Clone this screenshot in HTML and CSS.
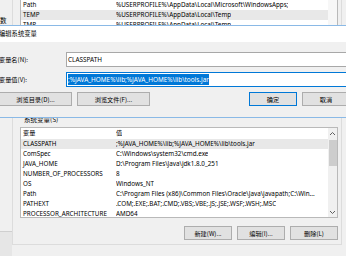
FILE: index.html
```html
<!DOCTYPE html>
<html>
<head>
  <title>编辑系统变量</title>
  <link rel="stylesheet" href="styles.css">
</head>
<body>
  <div class="screen">

    <!-- parent window: user variables (mostly hidden) -->
    <div class="top">
      <div class="gutter"><span class="cut-char">数</span></div>
      <div class="group">
        <div class="list list-top">
          <div class="rows">
            <div class="row"><span class="c1">Path</span><span class="c2">%USERPROFILE%\AppData\Local\Microsoft\WindowsApps;</span></div>
            <div class="row sel"><span class="c1">TEMP</span><span class="c2">%USERPROFILE%\AppData\Local\Temp</span></div>
            <div class="row"><span class="c1">TMP</span><span class="c2">%USERPROFILE%\AppData\Local\Temp</span></div>
          </div>
          <div class="track"></div>
        </div>
      </div>
    </div>

    <!-- edit dialog -->
    <div class="dialog">
      <div class="titlebar">编辑系统变量</div>
      <div class="dlg-body">
        <div class="field">
          <label for="varName">变量名(N):</label>
          <div class="input" id="varName">CLASSPATH</div>
        </div>
        <div class="field">
          <label for="varValue">变量值(V):</label>
          <div class="input focus" id="varValue"><span class="picked">;%JAVA_HOME%\lib;%JAVA_HOME%\lib\tools.jar</span></div>
        </div>
        <div class="btn-row">
          <button class="btn w-dir">浏览目录(D)...</button>
          <button class="btn w-file">浏览文件(F)...</button>
          <span class="spacer"></span>
          <button class="btn w-ok default">确定</button>
          <button class="btn w-ok">取消</button>
        </div>
      </div>
    </div>

    <!-- parent window: system variables -->
    <div class="bottom">
      <div class="gutter">
        <div class="gutter-box"></div>
      </div>
      <div class="group group-sys">
        <div class="group-label"><span>系统变量(S)</span></div>
        <div class="list list-sys">
          <div class="rows">
            <div class="row head"><span class="c1">变量</span><span class="c2">值</span></div>
            <div class="row sel"><span class="c1">CLASSPATH</span><span class="c2">;%JAVA_HOME%\lib;%JAVA_HOME%\lib\tools.jar</span></div>
            <div class="row"><span class="c1">ComSpec</span><span class="c2">C:\Windows\system32\cmd.exe</span></div>
            <div class="row"><span class="c1">JAVA_HOME</span><span class="c2">D:\Program Files\Java\jdk1.8.0_251</span></div>
            <div class="row"><span class="c1">NUMBER_OF_PROCESSORS</span><span class="c2">8</span></div>
            <div class="row"><span class="c1">OS</span><span class="c2">Windows_NT</span></div>
            <div class="row"><span class="c1">Path</span><span class="c2">C:\Program Files (x86)\Common Files\Oracle\Java\javapath;C:\Win...</span></div>
            <div class="row"><span class="c1">PATHEXT</span><span class="c2">.COM;.EXE;.BAT;.CMD;.VBS;.VBE;.JS;.JSE;.WSF;.WSH;.MSC</span></div>
            <div class="row"><span class="c1">PROCESSOR_ARCHITECTURE</span><span class="c2">AMD64</span></div>
          </div>
          <div class="scrollbar">
            <div class="arrow">
              <svg width="7" height="5" viewBox="0 0 7 5"><path d="M1 4 L3.5 1.5 L6 4" fill="none" stroke="#606060" stroke-width="1"/></svg>
            </div>
            <div class="thumb"></div>
            <div class="gap"></div>
            <div class="arrow">
              <svg width="7" height="5" viewBox="0 0 7 5"><path d="M1 1 L3.5 3.5 L6 1" fill="none" stroke="#606060" stroke-width="1"/></svg>
            </div>
          </div>
        </div>
        <div class="sys-buttons">
          <button class="btn w-sys">新建(W)...</button>
          <button class="btn w-sys">编辑(I)...</button>
          <button class="btn w-sys">删除(L)</button>
        </div>
      </div>
    </div>

  </div>
</body>
</html>
```

FILE: styles.css
```css
/* Windows 10 style environment variable dialogs */
body {
  margin: 0;
  background: #f0f0f0;
  font-family: "Noto Sans", "Noto Sans CJK SC", sans-serif;
  font-size: 6.3px;
  color: #000;
}
.screen {
  width: 346px;
  height: 256px;
  overflow: hidden;
  position: relative;
}

/* shared parent window pieces */
.top, .bottom {
  display: flex;
}
.gutter {
  width: 12px;
  flex: none;
  display: flex;
  flex-direction: column;
}
.cut-char {
  font-family: "Noto Sans CJK SC", sans-serif;
  font-size: 6.5px;
  line-height: 10px;
}
.group {
  width: 330px;
  border-left: 1px solid #dcdcdc;
  border-right: 1px solid #dcdcdc;
  padding-left: 7px;
  box-sizing: border-box;
}
.list {
  width: 318px;
  display: flex;
  background: #fff;
  border: 1px solid #b9b9b9;
  box-sizing: border-box;
}
.rows {
  width: 307px;
}
.row {
  display: flex;
  height: 10px;
  line-height: 10px;
  white-space: nowrap;
  overflow: hidden;
}
.row.sel {
  background: #e8e8e8;
}
.c1 {
  width: 93px;
  padding-left: 2px;
  flex: none;
}
.c2 {
  overflow: hidden;
}

/* top list */
.top {
  height: 25px;
}
.list-top {
  height: 25px;
  border-top: none;
  border-bottom: none;
}
.track {
  width: 9px;
  background: #f7f7f7;
}

/* dialog on top */
.dialog {
  margin-left: -12px;
  width: 372px;
  border-top: 1px solid #8ab9e6;
  border-bottom: 1px solid #8ab9e6;
  position: relative;
  z-index: 2;
}
.titlebar {
  height: 16px;
  line-height: 16px;
  padding-left: 11px;
  background: #fff;
  font-family: "Noto Sans CJK SC", sans-serif;
  font-size: 6.3px;
}
.dlg-body {
  height: 75px;
  padding: 10px 0 0 11px;
  box-sizing: border-box;
}
.field {
  display: flex;
  align-items: center;
  margin-bottom: 5px;
}
.field label {
  width: 67px;
  flex: none;
  font-family: "Noto Sans CJK SC", sans-serif;
  font-size: 6.2px;
}
.input {
  flex: 1;
  height: 15px;
  line-height: 13px;
  border: 1px solid #a8a8a8;
  background: #fff;
  box-sizing: border-box;
  padding-left: 1px;
  font-size: 6.4px;
  white-space: nowrap;
}
.input.focus {
  border-color: #0078d7;
}
.picked {
  background: #0078d7;
  color: #fff;
  padding: 1px 0;
}
.btn-row {
  display: flex;
  gap: 5px;
  margin-top: 3px;
}
.spacer {
  width: 89px;
}
.btn {
  height: 14px;
  padding: 0;
  background: #e1e1e1;
  border: 1px solid #adadad;
  font-family: "Noto Sans CJK SC", sans-serif;
  font-size: 6.2px;
  color: #000;
  box-sizing: border-box;
}
.btn.default {
  border-color: #0078d7;
}
.w-dir { width: 73px; }
.w-file { width: 73px; }
.w-ok { width: 48px; }

/* system variables */
.bottom {
  height: 138px;
}
.gutter {
  justify-content: flex-end;
}
.gutter-box {
  height: 24px;
  border-top: 1px solid #cfcfcf;
  background: #e6e6e6;
}
.group-sys {
  height: 127px;
  border-bottom: 1px solid #dcdcdc;
}
.group-label {
  height: 9px;
  overflow: hidden;
  padding-left: 4px;
  font-family: "Noto Sans CJK SC", sans-serif;
  font-size: 6.5px;
}
.group-label span {
  display: block;
  margin-top: -4px;
}
.list-sys {
  height: 91px;
}
.row.head {
  height: 11px;
  line-height: 10px;
}
.row.head span {
  font-family: "Noto Sans CJK SC", sans-serif;
  font-size: 6.2px;
}
.scrollbar {
  width: 9px;
  background: #f0f0f0;
  display: flex;
  flex-direction: column;
  align-items: center;
}
.arrow {
  height: 10px;
  display: flex;
  align-items: center;
  justify-content: center;
}
.thumb {
  width: 8px;
  height: 26px;
  background: #cdcdcd;
  margin-top: 2px;
}
.gap {
  flex: 1;
}
.sys-buttons {
  display: flex;
  justify-content: flex-end;
  gap: 5px;
  width: 318px;
  margin-top: 8px;
}
.w-sys { width: 48px; }
```
